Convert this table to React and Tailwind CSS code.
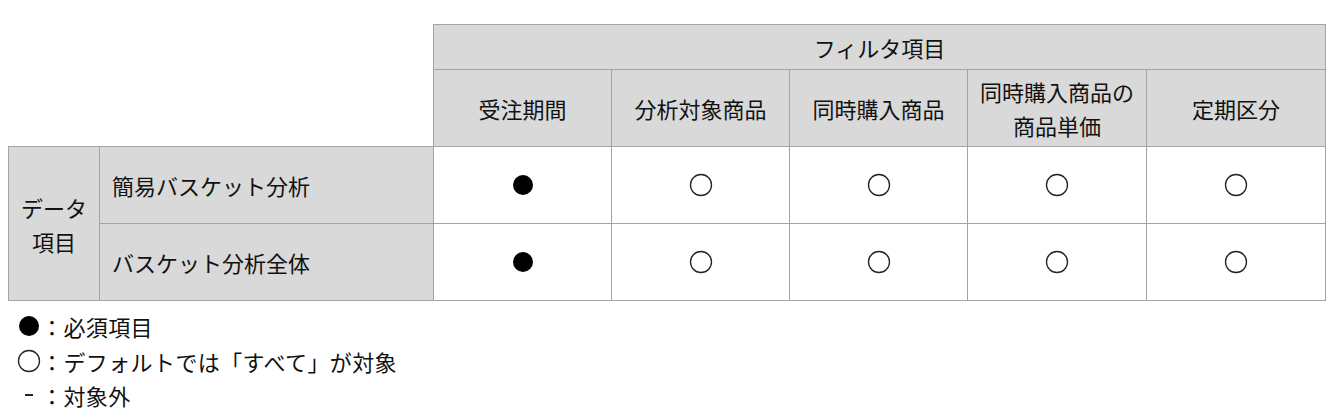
import React from "react";

const cols = ["受注期間", "分析対象商品", "同時購入商品", "同時購入商品の\n商品単価", "定期区分"];

const rows = [
  { label: "簡易バスケット分析", marks: ["req", "def", "def", "def", "def"] },
  { label: "バスケット分析全体", marks: ["req", "def", "def", "def", "def"] },
];

const Mark = ({ type }) =>
  type === "req" ? (
    <svg width="22" height="22" viewBox="0 0 22 22" className="inline-block">
      <circle cx="11" cy="11" r="10" fill="#000" />
    </svg>
  ) : type === "def" ? (
    <svg width="24" height="24" viewBox="0 0 24 24" className="inline-block">
      <circle cx="12" cy="12" r="10.5" fill="none" stroke="#222" strokeWidth="1.3" />
    </svg>
  ) : (
    <span className="inline-block w-[8px] h-[2px] bg-[#222]" />
  );

const legend = [
  { type: "req", text: "：必須項目" },
  { type: "def", text: "：デフォルトでは「すべて」が対象" },
  { type: "none", text: "：対象外" },
];

export default function App() {
  const cell = "border border-[#a3a3a3]";
  return (
    <div className="bg-white w-[1336px] h-[416px] pt-6 pl-2 text-[#111] font-['Noto_Sans_CJK_JP','Noto_Sans',sans-serif] text-[22px]">
      <table className="table-fixed border-collapse">
        <colgroup>
          <col className="w-[91px]" />
          <col className="w-[334px]" />
          <col className="w-[178px]" />
          <col className="w-[178px]" />
          <col className="w-[178px]" />
          <col className="w-[179px]" />
          <col className="w-[179px]" />
        </colgroup>
        <tbody>
          <tr className="h-[45px]">
            <td colSpan={2} rowSpan={2} className="border-0"></td>
            <td colSpan={5} className={`${cell} bg-[#d9d9d9] text-center leading-[34px]`}>フィルタ項目</td>
          </tr>
          <tr className="h-[77px]">
            {cols.map((c) => (
              <td key={c} className={`${cell} bg-[#d9d9d9] text-center leading-[34px] whitespace-pre-line`}>
                {c}
              </td>
            ))}
          </tr>
          {rows.map((r, i) => (
            <tr key={r.label} className="h-[77px]">
              {i === 0 && (
                <td rowSpan={2} className={`${cell} bg-[#d9d9d9] text-center leading-[34px]`}>
                  データ
                  <br />
                  項目
                </td>
              )}
              <td className={`${cell} bg-[#d9d9d9] pl-3 leading-[34px]`}>{r.label}</td>
              {r.marks.map((m, j) => (
                <td key={j} className={`${cell} text-center`}>
                  <div className="flex items-center justify-center">
                    <Mark type={m} />
                  </div>
                </td>
              ))}
            </tr>
          ))}
        </tbody>
      </table>
      <div className="mt-[8px] pl-[9px] flex flex-col">
        {legend.map((l) => (
          <div key={l.text} className="flex items-center h-[34.5px]">
            <span className="w-[24px] flex items-center justify-center">
              <Mark type={l.type} />
            </span>
            <span className="tracking-[0.4px] leading-[34px]">{l.text}</span>
          </div>
        ))}
      </div>
    </div>
  );
}
